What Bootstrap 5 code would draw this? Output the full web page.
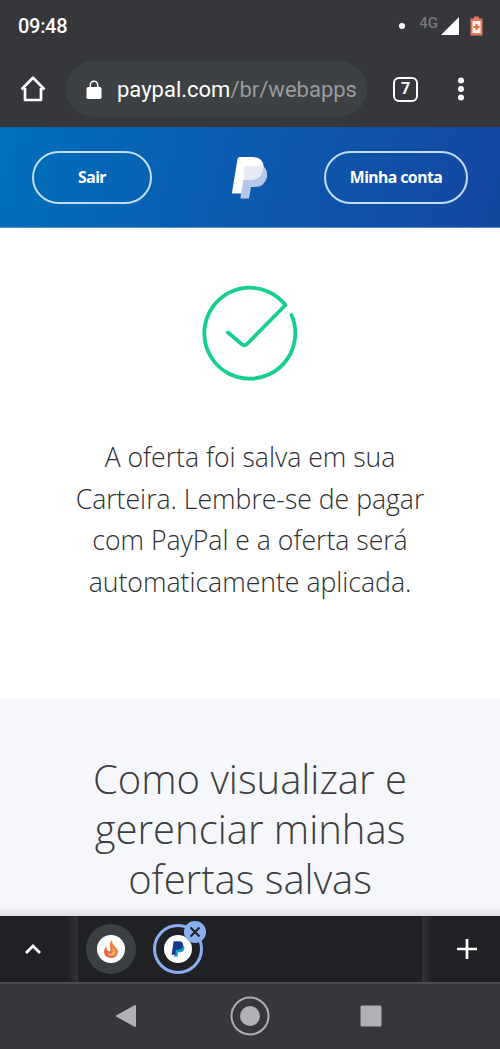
<!DOCTYPE html>
<html lang="pt-BR">
<head>
  <meta charset="UTF-8" />
  <meta name="viewport" content="width=device-width, initial-scale=1.0" />
  <title>PayPal | Oferta salva</title>
  <link href="https://cdn.jsdelivr.net/npm/bootstrap@5.3.0/dist/css/bootstrap.min.css" rel="stylesheet">
  <style>
    body {
      background: #fff;
      font-family: "Open Sans", "Noto Sans", sans-serif;
    }
    svg { display: block; flex-shrink: 0; }
    .screen { height: 1049px; }

    /* Browser chrome */
    .chrome-top {
      height: 127px;
      background: #36373b;
      font-family: Roboto, sans-serif;
    }
    .status-bar { height: 51px; padding: 1px 15px 0 18px; }
    .clock { font-size: 20px; font-weight: 500; letter-spacing: -.3px; }
    .status-dot { width: 6px; height: 6px; margin-right: 14px; }
    .network { font-size: 15px; line-height: 14px; color: #77787b; margin: 0 3px 7px 0; font-weight: 500; }
    .toolbar { height: 76px; padding-left: 20px; }
    .address {
      width: 301px;
      height: 56px;
      margin-left: 20px;
      padding: 1px 11px 0 20px;
      background: #3e4144;
    }
    .url { font-size: 22px; margin-left: 15px; color: #999b9d; }
    .tab-count {
      width: 25px;
      height: 25px;
      margin-left: 26px;
      border: 2.5px solid #fff;
      border-radius: 6px;
      font-size: 16px;
      font-weight: 700;
    }

    /* Page */
    .pp-header {
      height: 101px;
      padding: 1px 32px 0;
      background: linear-gradient(105deg, #0070ba 0%, #0b5cb0 45%, #1546a0 100%);
      border-bottom: 1px solid #5c8dcc;
    }
    .pp-btn {
      height: 53px;
      border: 2px solid #c3dcf3;
      font-family: "Noto Sans", "Open Sans", sans-serif;
      font-size: 15.8px;
      font-weight: 700;
      letter-spacing: -.55px;
      line-height: 1;
    }
    .pp-btn-exit { width: 120px; }
    .pp-btn-account { width: 144px; }
    .pp-logo { margin-left: 22px; }
    .saved { height: 470px; padding-top: 57px; color: #2c2e2f; }
    .saved-text {
      margin-top: 54px;
      font-size: 26.6px;
      line-height: 41.7px;
      font-weight: 300;
    }
    .manage { height: 218px; padding-top: 56px; background: #f5f7fa; color: #3c3e40; }
    .manage-title {
      font-size: 40px;
      line-height: 50px;
      font-weight: 300;
    }
    .manage-shade { height: 9px; background: linear-gradient(rgba(200, 202, 208, 0), #dcdee1); }

    /* Tab strip and system navigation */
    .tab-strip { height: 66px; background: #202124; }
    .strip-end { width: 78px; }
    .strip-left { background: linear-gradient(90deg, transparent 86%, #303134 98%); padding-right: 12px; }
    .strip-right { background: linear-gradient(270deg, transparent 86%, #303134 98%); padding-left: 11px; }
    .tab-pill { width: 50px; height: 50px; background: #3c4043; }
    .tab-current { background: transparent; border: 3px solid #8aaef2; margin-left: 17px; }
    .tab-icon { width: 28px; height: 28px; background: #fff; }
    .tab-close { width: 22px; height: 22px; top: -6px; right: -6px; background: #8aaef2; }
    .nav-buttons { height: 67px; padding: 0 118px 2px 115px; background: #36373b; border-top: 2px solid #4a4b4e; }
    .nav-home { margin-left: 2px; }
  </style>
</head>
<body>
  <div class="screen d-flex flex-column overflow-hidden">
    <div class="chrome-top text-white">
      <div class="status-bar d-flex align-items-center">
        <span class="clock me-auto">09:48</span>
        <span class="status-dot bg-white rounded-circle"></span>
        <span class="network">4G</span>
        <svg width="18" height="18" viewBox="0 0 18 18"><path d="M18 0V18H0z" fill="#fff"/></svg>
        <svg class="ms-2" width="18" height="20" viewBox="0 0 18 20">
          <path d="M7 .500h5v2h3.500v17h-12v-17H7z" fill="#e8765a"/>
          <path d="M5.500 5h8v12h-8z" fill="#fff0e8"/>
          <path d="M9.500 8v6M6.500 11h6" stroke="#e8694c" stroke-width="2"/>
        </svg>
      </div>
      <div class="toolbar d-flex align-items-center">
        <svg width="26" height="28" viewBox="0 0 26 28">
          <path d="M5 13v12h16V13M1.500 14.500L13 2.800l11.500 11.700" fill="none" stroke="#fff" stroke-width="2.700" stroke-linejoin="round"/>
        </svg>
        <div class="address rounded-pill d-flex align-items-center flex-shrink-0">
          <svg width="16" height="20" viewBox="0 0 16 20">
            <rect x=".5" y="7" width="15" height="12" rx="1.800" fill="#fff"/>
            <path d="M4.300 8V5a3.700 3.700 0 0 1 7.400 0v3" fill="none" stroke="#fff" stroke-width="1.500"/>
          </svg>
          <div class="url overflow-hidden text-nowrap"><span class="text-white">paypal.com</span>/br/webapps</div>
        </div>
        <div class="tab-count d-flex align-items-center justify-content-center flex-shrink-0">7</div>
        <svg width="82" height="26" viewBox="0 0 82 26" fill="#fff">
          <circle cx="43" cy="4.500" r="3"/><circle cx="43" cy="13" r="3"/><circle cx="43" cy="21.500" r="3"/>
        </svg>
      </div>
    </div>

    <header class="pp-header d-flex align-items-center justify-content-between">
      <button type="button" class="pp-btn pp-btn-exit btn p-0 rounded-pill text-white">Sair</button>
      <svg class="pp-logo" width="37" height="44" viewBox="0 0 37 44">
        <path d="M12 10h20q5 4 4 11q-2 10-13 10h-3l-2 11.500H9.500z" fill="#b5c8e7"/>
        <path d="M8.500 1H21q11 0 11.500 9.500Q32 24 18 24h-5.500L10 37.500H1.800Q.8 37.500 1 36.500L6.500 3Q7 1 8.500 1z" fill="#fff"/>
        <path d="M13.500 12q0-2 2-2h17Q32 24 19 24h-6.500z" fill="#e5eaf6"/>
      </svg>
      <button type="button" class="pp-btn pp-btn-account btn p-0 rounded-pill text-white">Minha conta</button>
    </header>

    <main class="text-center">
      <section class="saved">
        <svg class="mx-auto" width="98" height="98" viewBox="0 0 98 98">
          <path d="M90.500 30A45.500 45.500 0 1 1 84.500 20L46 59Q43.500 61.500 40.500 59L27 47.500" fill="none" stroke="#16ce8e" stroke-width="3.800" stroke-linecap="round" stroke-linejoin="round"/>
        </svg>
        <p class="saved-text mb-0">A oferta foi salva em sua<br>Carteira. Lembre-se de pagar<br>com PayPal e a oferta será<br>automaticamente aplicada.</p>
      </section>
      <section class="manage d-flex flex-column">
        <h1 class="manage-title mb-0">Como visualizar e<br>gerenciar minhas<br>ofertas salvas</h1>
        <div class="manage-shade mt-auto"></div>
      </section>
    </main>

    <div class="tab-strip d-flex">
      <div class="strip-end strip-left d-flex align-items-center justify-content-center">
        <svg width="18" height="12" viewBox="0 0 18 12"><path d="M2 10l7-7 7 7" fill="none" stroke="#fff" stroke-width="2.800"/></svg>
      </div>
      <div class="d-flex align-items-center flex-grow-1 ps-2">
        <div class="tab-pill rounded-circle d-flex align-items-center justify-content-center">
          <div class="tab-icon rounded-circle d-flex align-items-center justify-content-center">
            <svg width="16" height="20" viewBox="0 0 16 20">
              <defs>
                <linearGradient id="flame" x1="1" y1="0" x2="0" y2="1"><stop offset="0" stop-color="#f9a03a"/><stop offset="1" stop-color="#e84a3c"/></linearGradient>
              </defs>
              <path d="M8.500 1Q9 4.500 12.500 8Q15 10.500 15 13Q14 19 8 19 1 18 1 12.500q0-2.500 2.500-5 0 4.500 2.500 5 2.500-.5 1-4Q6 5 8.500 1z" fill="url(#flame)"/>
              <path d="M9 8q2.500 5-.5 6.500Q6 15.500 4 13.500q1 3.500 4.500 3.500 4-.5 3.500-4.500Q11.500 10 9 8z" fill="#fbb877"/>
            </svg>
          </div>
        </div>
        <div class="tab-pill tab-current rounded-circle position-relative d-flex align-items-center justify-content-center">
          <div class="tab-icon rounded-circle d-flex align-items-center justify-content-center">
            <svg width="14" height="16" viewBox="0 0 37 44">
              <path d="M12 10h19q6 4 5 11q-2 10-13 10h-4l-2 12H8z" fill="#169bd7"/>
              <path d="M6.500 1H21q11 0 11.500 9.500Q32 24 18 24h-5.500L11 37.500H.8z" fill="#123984"/>
            </svg>
          </div>
          <div class="tab-close rounded-circle position-absolute d-flex align-items-center justify-content-center">
            <svg width="12" height="12" viewBox="0 0 12 12"><path d="M1.500 1.500l9 9M10.500 1.500l-9 9" stroke="#202124" stroke-width="2"/></svg>
          </div>
        </div>
      </div>
      <div class="strip-end strip-right d-flex align-items-center justify-content-center">
        <svg width="20" height="20" viewBox="0 0 20 20"><path d="M10 0v20M0 10h20" stroke="#fff" stroke-width="2.700"/></svg>
      </div>
    </div>

    <nav class="nav-buttons d-flex align-items-center justify-content-between">
      <svg width="22" height="24" viewBox="0 0 22 24"><path d="M20 2v20L2 12z" fill="#b0b1b4" stroke="#b0b1b4" stroke-width="2" stroke-linejoin="round"/></svg>
      <svg class="nav-home" width="40" height="40" viewBox="0 0 40 40">
        <circle cx="20" cy="20" r="18.500" fill="none" stroke="#aeafb2" stroke-width="2"/>
        <circle cx="20" cy="20" r="10" fill="#b0b1b4"/>
      </svg>
      <svg width="22" height="22" viewBox="0 0 22 22"><rect x=".5" y=".5" width="21" height="21" rx="1.500" fill="#b0b1b4"/></svg>
    </nav>
  </div>

  <script src="https://cdn.jsdelivr.net/npm/bootstrap@5.3.0/dist/js/bootstrap.bundle.min.js"></script>
</body>
</html>
